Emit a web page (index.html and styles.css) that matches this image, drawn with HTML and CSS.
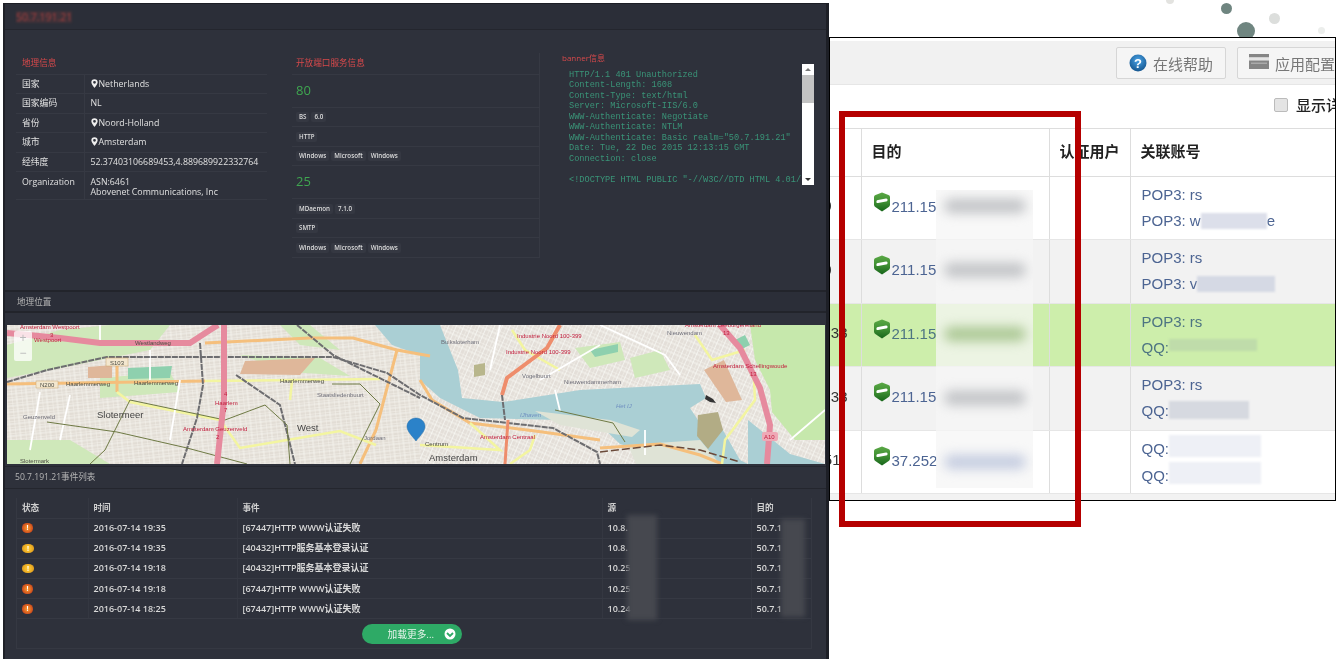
FILE: index.html
```html
<!DOCTYPE html>
<html lang="zh-CN">
<head>
  <meta charset="UTF-8">
  <title>50.7.191.21</title>
  <link rel="stylesheet" href="styles.css">
</head>
<body>

<div class="collage">

  <!-- decorative dots behind the right screenshot -->
  <span class="dot dot-a"></span>
  <span class="dot dot-b"></span>
  <span class="dot dot-c"></span>
  <span class="dot dot-d"></span>
  <span class="dot dot-e"></span>

  <!-- right screenshot -->
  <div class="shot">
    <div class="toolbar">
      <div class="tool-btn tool-help">
        <svg class="tool-icon" viewBox="0 0 18 18" width="18" height="18">
          <defs><radialGradient id="helpfill" cx="50%" cy="35%" r="65%"><stop offset="0" stop-color="#4aa3e6"/><stop offset="1" stop-color="#15568f"/></radialGradient></defs>
          <circle cx="9" cy="9" r="8.500" fill="url(#helpfill)"/><text x="9" y="13.500" class="help-mark">?</text>
        </svg>
        <span>在线帮助</span>
      </div>
      <div class="tool-btn tool-conf">
        <svg class="tool-icon conf-icon" viewBox="0 0 20 15" width="20" height="15"><rect width="20" height="3.500" fill="#858585"/><rect y="3.500" width="20" height="3" fill="#e4e4e4"/><rect y="6.500" width="20" height="8.500" fill="#858585"/><rect x="2" y="8.500" width="16" height="1.500" fill="#aaa"/></svg>
        <span>应用配置</span>
      </div>
    </div>
    <div class="detail-row">
      <span class="checkbox"></span>
      <span class="detail-label">显示详</span>
    </div>
    <table class="grid">
      <colgroup><col class="c-src"><col class="c-dst"><col class="c-user"><col></colgroup>
      <thead>
        <tr><th></th><th>目的</th><th>认证用户</th><th>关联账号</th></tr>
      </thead>
      <tbody>
        <tr>
          <td class="cut cut-far"><span>0</span></td>
          <td class="dst"><svg class="shield" viewBox="0 0 16 20" width="16" height="20"><use href="#shield-icon"/></svg>211.15</td>
          <td></td>
          <td class="acct"><div>POP3: rs</div><div>POP3: w<span class="mask mask-a"></span>e</div></td>
        </tr>
        <tr class="alt">
          <td class="cut cut-far"><span>0</span></td>
          <td class="dst"><svg class="shield" viewBox="0 0 16 20" width="16" height="20"><use href="#shield-icon"/></svg>211.15</td>
          <td></td>
          <td class="acct"><div>POP3: rs</div><div>POP3: v<span class="mask mask-b"></span></div></td>
        </tr>
        <tr class="hit">
          <td class="cut"><span>33</span></td>
          <td class="dst"><svg class="shield" viewBox="0 0 16 20" width="16" height="20"><use href="#shield-icon"/></svg>211.15</td>
          <td></td>
          <td class="acct"><div>POP3: rs</div><div>QQ:<span class="mask mask-c"></span></div></td>
        </tr>
        <tr class="alt">
          <td class="cut"><span>33</span></td>
          <td class="dst"><svg class="shield" viewBox="0 0 16 20" width="16" height="20"><use href="#shield-icon"/></svg>211.15</td>
          <td></td>
          <td class="acct"><div>POP3: rs</div><div>QQ:<span class="mask mask-d"></span></div></td>
        </tr>
        <tr>
          <td class="cut cut-mid"><span>51</span></td>
          <td class="dst"><svg class="shield" viewBox="0 0 16 20" width="16" height="20"><use href="#shield-icon"/></svg>37.252</td>
          <td></td>
          <td class="acct"><div>QQ:<span class="mask mask-e"></span></div><div>QQ:<span class="mask mask-e"></span></div></td>
        </tr>
      </tbody>
    </table>
    <div class="grid-foot"></div>
  </div>

  <!-- blur patch over the destination column -->
  <div class="blur-patch">
    <span class="smear smear-1"></span>
    <span class="smear smear-2"></span>
    <span class="smear smear-3"></span>
    <span class="smear smear-4"></span>
    <span class="smear smear-5"></span>
  </div>

  <div class="red-box"></div>

  <!-- left dark screenshot -->
  <div class="panel">
    <div class="panel-head"><span class="ip-title">50.7.191.21</span></div>

    <div class="info">
      <table class="tbl geo">
        <colgroup><col class="geo-key"><col></colgroup>
        <tr class="tbl-title"><td colspan="2">地理信息</td></tr>
        <tr><td class="k">国家</td><td><svg class="pin-mini" viewBox="0 0 8 10" width="7" height="9"><path d="M4 0a3.600 3.600 0 0 0-3.600 3.600C.4 6 4 10 4 10s3.600-4 3.600-6.400A3.600 3.600 0 0 0 4 0zm0 5.200a1.600 1.600 0 1 1 0-3.200 1.600 1.600 0 0 1 0 3.200z"/></svg>Netherlands</td></tr>
        <tr><td class="k">国家编码</td><td>NL</td></tr>
        <tr><td class="k">省份</td><td><svg class="pin-mini" viewBox="0 0 8 10" width="7" height="9"><path d="M4 0a3.600 3.600 0 0 0-3.600 3.600C.4 6 4 10 4 10s3.600-4 3.600-6.400A3.600 3.600 0 0 0 4 0zm0 5.200a1.600 1.600 0 1 1 0-3.200 1.600 1.600 0 0 1 0 3.200z"/></svg>Noord-Holland</td></tr>
        <tr><td class="k">城市</td><td><svg class="pin-mini" viewBox="0 0 8 10" width="7" height="9"><path d="M4 0a3.600 3.600 0 0 0-3.600 3.600C.4 6 4 10 4 10s3.600-4 3.600-6.400A3.600 3.600 0 0 0 4 0zm0 5.200a1.600 1.600 0 1 1 0-3.200 1.600 1.600 0 0 1 0 3.200z"/></svg>Amsterdam</td></tr>
        <tr><td class="k">经纬度</td><td>52.37403106689453,4.889689922332764</td></tr>
        <tr class="org"><td class="k">Organization</td><td>ASN:6461<br>Abovenet Communications, Inc</td></tr>
      </table>

      <table class="tbl ports">
        <tr class="tbl-title"><td>开放端口服务信息</td></tr>
        <tr class="port"><td>80</td></tr>
        <tr><td><span class="tag">BS</span><span class="tag">6.0</span></td></tr>
        <tr><td><span class="tag">HTTP</span></td></tr>
        <tr><td><span class="tag">Windows</span><span class="tag">Microsoft</span><span class="tag">Windows</span></td></tr>
        <tr class="port"><td>25</td></tr>
        <tr><td><span class="tag">MDaemon</span><span class="tag">7.1.0</span></td></tr>
        <tr><td><span class="tag">SMTP</span></td></tr>
        <tr><td><span class="tag">Windows</span><span class="tag">Microsoft</span><span class="tag">Windows</span></td></tr>
      </table>

      <div class="banner">
        <div class="banner-title">banner信息</div>
        <div class="banner-box">
          <pre class="banner-text">HTTP/1.1 401 Unauthorized
Content-Length: 1608
Content-Type: text/html
Server: Microsoft-IIS/6.0
WWW-Authenticate: Negotiate
WWW-Authenticate: NTLM
WWW-Authenticate: Basic realm="50.7.191.21"
Date: Tue, 22 Dec 2015 12:13:15 GMT
Connection: close

&lt;!DOCTYPE HTML PUBLIC "-//W3C//DTD HTML 4.01/</pre>
          <div class="scrollbar">
            <span class="arrow arrow-up"></span>
            <span class="thumb"></span>
            <span class="track"></span>
            <span class="arrow arrow-down"></span>
          </div>
        </div>
      </div>
    </div>

    <div class="section-head">地理位置</div>

    <div class="map">
      <svg class="map-svg" viewBox="7 325 818 139" width="818" height="139">
        <defs>
          <pattern id="blocks" width="10" height="6" patternUnits="userSpaceOnUse" patternTransform="rotate(-6)">
            <rect width="10" height="6" fill="#e2ddd5"/>
            <path d="M0 0H10M0 3H10M0 0V6M5 0V6" stroke="#f7f6f1" stroke-width=".8"/>
          </pattern>
          <pattern id="blocks2" width="7" height="9" patternUnits="userSpaceOnUse" patternTransform="rotate(24)">
            <rect width="7" height="9" fill="#e4dfd9"/>
            <path d="M0 0H7M0 4H7M0 0V9M3.500 0V9" stroke="#f8f8f4" stroke-width=".8"/>
          </pattern>
          <linearGradient id="shieldfill" x1="0" y1="0" x2="0" y2="1">
            <stop offset="0" stop-color="#5aa845"/>
            <stop offset=".5" stop-color="#3f8f33"/>
            <stop offset="1" stop-color="#17651a"/>
          </linearGradient>
          <symbol id="shield-icon" viewBox="0 0 16 20">
            <path d="M8 .5 14.500 3Q16 3.600 16 5V12.500Q16 14 14.700 15L8 19.500 1.300 15Q0 14 0 12.500V5Q0 3.600 1.500 3z" fill="url(#shieldfill)"/>
            <path d="M2.500 10.500Q2 8 4 8L12 6.500Q14 6.300 13.500 8.500Q13.300 9.500 12 9.600L4 11Q2.800 11.200 2.500 10.500z" fill="#fff"/>
          </symbol>
        </defs>

        <rect x="7" y="325" width="818" height="139" fill="url(#blocks)"/>
        <rect x="420" y="325" width="405" height="139" fill="url(#blocks2)"/>

        <!-- parks and industrial patches -->
        <path class="park" d="M7 345 60 330 110 325 170 325 150 350 60 368 7 378z"/>
        <path class="park" d="M100 378 170 372 180 392 100 398z"/>
        <path class="park" d="M7 440 70 440 110 464H7z"/>
        <path class="park" d="M240 355 320 358 350 376 290 372z"/>
        <path class="sand" d="M245 361 315 358 300 375 240 374z"/>
        <path class="sand" d="M88 367 112 365 112 378 88 378z"/>
        <path class="park2" d="M128 368 172 366 170 378 128 379z"/>
        <path class="park" d="M280 325H310L340 350 300 345z"/>
        <path class="park" d="M575 348 620 342 625 360 590 368z"/>
        <path class="park" d="M630 358 660 350 670 370 635 378z"/>
        <path class="park2" d="M590 350 618 344 618 352 595 357z"/>

        <!-- water -->
        <path class="water" d="M420 325H440L458 370 462 398 503 402 580 390 700 384 706 398 690 408 698 420 720 425 740 460 748 464H660L640 450 620 444 600 425 560 420 480 418 440 398 420 380z"/>
        <path class="water" d="M375 325H420V355L392 345z"/>
        <path class="water" d="M748 420 790 454 825 464H748z"/>

        <!-- east side green and islands -->
        <path class="green" d="M750 325H825V440L795 440 772 412 770 390 755 360z"/>
        <path class="sand2" d="M698 415 718 412 723 430 708 449 697 436z"/>
        <path class="land" d="M535 411 610 420 640 430 632 437 560 425z"/>
        <path class="land" d="M628 445 700 440 720 464H636z"/>
        <path class="olive" d="M474 365 485 363 485 375 474 377z"/>
        <path class="sand" d="M704 370 724 360 742 400 726 402z"/>
        <path class="park2" d="M745 335 735 340 740 350 750 345z"/>

        <!-- primary roads -->
        <g class="road-o">
          <path d="M7 384 205 381"/>
          <path d="M205 343 310 338 353 338 397 350 430 356"/>
          <path d="M117 362V392"/>
          <path d="M397 350 376 430 360 464"/>
          <path d="M420 380 432 400 470 423 535 431 600 440"/>
          <path d="M600 448 660 444 700 455 722 464"/>
        </g>
        <g class="road-y">
          <path d="M205 381 380 379"/>
          <path d="M117 392 130 402 220 420 240 448 340 431 376 445"/>
          <path d="M512 330 525 350 560 370"/>
          <path d="M695 335 712 360 745 350"/>
          <path d="M722 464 725 440 755 400 754 380 745 360"/>
          <path d="M470 423 500 450 420 445"/>
          <path d="M535 435 530 450 510 464"/>
          <path d="M292 381 290 400"/>
        </g>
        <g class="road-w">
          <path d="M100 325V345M150 350V380M180 380 170 440M40 392 30 450M70 395 60 440"/>
          <path d="M500 325 490 370M600 325 665 355 680 375M540 380 600 345"/>
          <path d="M560 411 555 390M645 455V430M790 440 825 410"/>
        </g>

        <!-- rail lines -->
        <g class="rail">
          <path d="M7 382 47 370 107 357 200 357 333 357 387 373 420 395 463 418 553 428 597 452 600 464"/>
          <path d="M200 343 203 385 197 418 182 464"/>
          <path d="M297 325 333 355 420 398"/>
          <path d="M236 375 280 405 295 464"/>
          <path d="M502 395 505 420"/>
        </g>

        <!-- metro and tram lines -->
        <g class="tram">
          <path d="M47 422 117 432 187 448 247 464"/>
          <path d="M130 400 225 420 265 405"/>
          <path d="M332 384 360 384 380 404 350 464"/>
          <path d="M265 405 287 425 290 464"/>
          <path d="M130 400 105 450 90 464"/>
          <path d="M555 410 613 423 625 442"/>
        </g>

        <!-- motorways -->
        <g class="motor">
          <path d="M7 333 60 338 100 343 190 343 210 330 218 325"/>
          <path d="M224 325V400L217 464"/>
          <path d="M720 325 740 348 760 388 770 425 767 464"/>
        </g>
        <path class="motor-o" d="M560 325 547 348 507 378 502 395"/>
        <path class="motor-o thin" d="M508 420 505 464"/>
        <path class="ferry" d="M600 452 660 445 700 450 740 462"/>

        <!-- map labels -->
        <text class="lb lb-red" x="20" y="329">Amsterdam Westpoort</text>
        <text class="lb lb-red" x="50" y="337">3</text>
        <text class="lb lb-red" x="34" y="342">Westpoort</text>
        <text class="lb lb-dk" x="135" y="345">Westlandweg</text>
        <rect class="shield-lb" x="106" y="358" width="22" height="8"/>
        <text class="lb lb-dk" x="110" y="364.500">S103</text>
        <rect class="shield-lb" x="36" y="381" width="22" height="7"/>
        <text class="lb lb-dk" x="40" y="387">N200</text>
        <text class="lb lb-dk" x="66" y="386">Haarlemmerweg</text>
        <text class="lb lb-dk" x="134" y="385">Haarlemmerweg</text>
        <text class="lb lb-dk" x="280" y="383">Haarlemmerweg</text>
        <text class="lb lb-gr" x="317" y="397">Staatsliedenbuurt</text>
        <text class="lb lb-red" x="215" y="405">Haarlem</text>
        <text class="lb lb-red" x="224" y="396">4</text>
        <text class="lb lb-red" x="224" y="412">7</text>
        <text class="lb lb-gr" x="23" y="419">Geuzenveld</text>
        <text class="lb-town" x="97" y="418">Slotermeer</text>
        <text class="lb lb-red" x="183" y="431">Amsterdam Geuzenveld</text>
        <text class="lb lb-red" x="216" y="439">2</text>
        <text class="lb-town" x="297" y="431">West</text>
        <text class="lb lb-gr" x="364" y="440">Jordaan</text>
        <text class="lb lb-dk" x="20" y="463">Slotermark</text>
        <text class="lb lb-gr" x="441" y="344">Buiksloterham</text>
        <text class="lb lb-red" x="517" y="338">Industrie Noord 100-399</text>
        <text class="lb lb-red" x="506" y="354">Industrie Noord 100-399</text>
        <text class="lb lb-gr" x="522" y="378">Vogelbuurt</text>
        <text class="lb lb-gr" x="564" y="384">Nieuwendammerham</text>
        <text class="lb lb-gr" x="667" y="335">Nieuwendam</text>
        <text class="lb lb-red" x="685" y="327">Amsterdam Zeeburgereiland</text>
        <text class="lb lb-red" x="723" y="335">13</text>
        <text class="lb lb-red" x="713" y="368">Amsterdam Schellingwoude</text>
        <text class="lb lb-red" x="750" y="376">13</text>
        <text class="lb lb-blue" x="616" y="408">Het IJ</text>
        <text class="lb lb-blue" x="520" y="417">IJhaven</text>
        <text class="lb lb-red" x="480" y="439">Amsterdam Centraal</text>
        <text class="lb lb-dk" x="425" y="446">Centrum</text>
        <text class="lb-town" x="429" y="461">Amsterdam</text>
        <rect class="shield-a10" x="762" y="432" width="16" height="9" rx="2"/>
        <text class="lb lb-red" x="764" y="439">A10</text>
        <path class="boat" d="M706 395l7 4 3 4-6-1-5-3z"/>

        <!-- marker -->
        <path class="marker" d="M416 418c-5 0-9 3.800-9 8.600 0 5 6 10.400 9 14.400 3-4 9-9.400 9-14.400 0-4.800-4-8.600-9-8.600z"/>
      </svg>
      <div class="zoom-ctl">
        <span class="zoom-btn">+</span>
        <span class="zoom-btn">−</span>
      </div>
    </div>

    <div class="events">
      <div class="events-head">50.7.191.21事件列表</div>
      <div class="events-wrap">
        <table class="ev-table">
          <colgroup><col class="e1"><col class="e2"><col class="e3"><col class="e4"><col></colgroup>
          <thead>
            <tr><th>状态</th><th>时间</th><th>事件</th><th>源</th><th>目的</th></tr>
          </thead>
          <tbody>
            <tr><td><span class="alert alert-red">!</span></td><td>2016-07-14 19:35</td><td>[67447]HTTP WWW认证失败</td><td>10.8.</td><td>50.7.1</td></tr>
            <tr><td><span class="alert alert-amber">!</span></td><td>2016-07-14 19:35</td><td>[40432]HTTP服务基本登录认证</td><td>10.8.</td><td>50.7.1</td></tr>
            <tr><td><span class="alert alert-amber">!</span></td><td>2016-07-14 19:18</td><td>[40432]HTTP服务基本登录认证</td><td>10.25</td><td>50.7.1</td></tr>
            <tr><td><span class="alert alert-red">!</span></td><td>2016-07-14 19:18</td><td>[67447]HTTP WWW认证失败</td><td>10.25</td><td>50.7.1</td></tr>
            <tr><td><span class="alert alert-red">!</span></td><td>2016-07-14 18:25</td><td>[67447]HTTP WWW认证失败</td><td>10.24</td><td>50.7.1</td></tr>
          </tbody>
        </table>
        <div class="more-row">
          <button class="more-btn">加载更多...
            <svg class="more-icon" viewBox="0 0 12 12" width="12" height="12"><circle cx="6" cy="6" r="5.500" fill="#fff"/><path d="M3 5l3 3 3-3" fill="none" stroke="#2eaa66" stroke-width="1.800"/></svg>
          </button>
        </div>
      </div>
      <span class="ev-blur ev-blur-src"></span>
      <span class="ev-blur ev-blur-dst"></span>
    </div>
  </div>

</div>

</body>
</html>
```

FILE: styles.css
```css
html, body {
  margin: 0;
  padding: 0;
  background: #fff;
  overflow: hidden;
}

.collage {
  position: relative;
  width: 1338px;
  height: 659px;
  overflow: hidden;
  font-family: "Open Sans", "Noto Sans CJK SC", sans-serif;
}

/* dots */
.dot {
  position: absolute;
  border-radius: 50%;
}
.dot-a { left: 1166px; top: -4px; width: 8px; height: 8px; background: #e3e3e0; }
.dot-b { left: 1221px; top: 3px; width: 11px; height: 11px; background: #6f8580; }
.dot-c { left: 1237px; top: 22px; width: 18px; height: 18px; background: #6f8580; }
.dot-d { left: 1269px; top: 13px; width: 11px; height: 11px; background: #dcdedc; }
.dot-e { left: 1318px; top: 27px; width: 7px; height: 7px; background: #eceeec; }

/* right screenshot */
.shot {
  position: absolute;
  left: 829px;
  top: 37px;
  width: 505px;
  height: 462px;
  border: 1px solid #000;
  background: #fff;
  overflow: hidden;
  filter: blur(0.3px);
}

.toolbar {
  display: flex;
  gap: 11px;
  height: 44px;
  margin-top: 3px;
  padding: 6px 0 0 286px;
  box-sizing: border-box;
  background: #f1f1f1;
  border-bottom: 1px solid #e6e6e6;
}

.tool-btn {
  display: flex;
  flex-shrink: 0;
  align-items: center;
  gap: 6px;
  height: 32px;
  box-sizing: border-box;
  border: 1px solid #d6d6d6;
  border-radius: 2px;
  background: #f5f5f5;
  color: #777;
  font-size: 15px;
  font-family: "Noto Sans CJK SC", sans-serif;
}
.tool-help { width: 110px; padding-left: 12px; }
.tool-conf { width: 110px; padding-left: 11px; }
.conf-icon { margin-bottom: 4px; }

.help-mark {
  font-family: "Liberation Sans", sans-serif;
  font-size: 13px;
  font-weight: bold;
  fill: #fff;
  text-anchor: middle;
}

.detail-row {
  display: flex;
  align-items: center;
  gap: 8px;
  height: 43px;
  padding: 0 0 4px 444px;
  box-sizing: border-box;
  white-space: nowrap;
}
.checkbox {
  flex-shrink: 0;
  width: 12px;
  height: 12px;
  border: 1px solid #bbb;
  border-radius: 2px;
  background: #e4e4e4;
}
.detail-label {
  font-family: "Noto Sans CJK SC", sans-serif;
  font-size: 15px;
  font-weight: 500;
  color: #222;
}

.grid {
  width: 505px;
  border-collapse: collapse;
  table-layout: fixed;
  font-family: "Liberation Sans", "Noto Sans CJK SC", sans-serif;
  font-size: 15px;
  color: #4c6492;
}
.c-src { width: 31px; }
.c-dst { width: 188px; }
.c-user { width: 81px; }

.grid th {
  height: 47.500px;
  padding: 0 0 3px 10px;
  box-sizing: border-box;
  border-top: 1px solid #ddd;
  border-bottom: 1px solid #ddd;
  border-left: 1px solid #ddd;
  text-align: left;
  color: #222;
  font-size: 15px;
  font-family: "Noto Sans CJK SC", sans-serif;
  white-space: nowrap;
}
.grid th:first-child { border-left: 0; }

.grid td {
  height: 63.500px;
  box-sizing: border-box;
  padding: 0 0 0 12px;
  border-left: 1px solid #ddd;
  border-bottom: 1px solid #e6e6e6;
  white-space: nowrap;
  overflow: hidden;
}
.grid td:first-child { border-left: 0; }
.grid .alt td { background: #f2f2f2; }
.grid .hit td { background: #cdeeab; color: #4d7482; }

/* the source column is cut off by the dark panel, only the tail shows */
.grid td.cut {
  padding: 0 13px 4px 0;
  color: #333;
}
.cut span {
  display: block;
  margin-left: -30px;
  text-align: right;
}
.grid td.cut-far { padding-right: 29px; }
.grid td.cut-mid { padding-right: 20px; }

.grid td.dst {
  padding-bottom: 7px;
  line-height: 20px;
}
.shield {
  margin-right: 2px;
  vertical-align: 0;
}

.grid td.acct { padding: 0 0 0 11px; line-height: 26px; }

.mask {
  display: inline-block;
  height: 16px;
  vertical-align: -3px;
  filter: blur(1px);
}
.mask-a { width: 66px; background: #dcdfea; }
.mask-b { width: 78px; background: #d5d9e4; }
.mask-c { width: 88px; height: 12px; vertical-align: 2px; background: #bfdcaa; }
.mask-d { width: 80px; height: 18px; background: #d6d9e0; }
.mask-e { width: 92px; height: 22px; background: #eef0f6; }

.grid-foot {
  height: 6px;
  background: #f2f2f2;
}

/* blur patch */
.blur-patch {
  position: absolute;
  left: 936px;
  top: 190px;
  width: 97px;
  height: 298px;
  background: rgba(246, 246, 246, 0.75);
  overflow: hidden;
}
.smear {
  position: absolute;
  left: 8px;
  width: 82px;
  height: 14px;
  border-radius: 7px;
  background: #c0c2c5;
  filter: blur(6px);
}
.smear-1 { top: 9px; }
.smear-2 { top: 73px; }
.smear-3 { top: 137px; background: #a9c691; }
.smear-4 { top: 201px; }
.smear-5 { top: 265px; background: #c3cbdf; }

/* red frame */
.red-box {
  position: absolute;
  left: 839px;
  top: 111px;
  width: 230px;
  height: 404px;
  border: 6px solid #b50000;
}

/* left dark screenshot */
.panel {
  position: absolute;
  left: 3px;
  top: 3px;
  width: 826px;
  height: 656px;
  box-sizing: border-box;
  background: #2e313b;
  border-top: 1px solid #1c1e25;
  border-left: 2px solid #1f2128;
  border-right: 3px solid #1d1f26;
  color: #e0e0e0;
  font-size: 8.800px;
  overflow: hidden;
  filter: blur(0.3px);
}

.panel-head {
  height: 26px;
  padding: 7px 0 0 11px;
  box-sizing: border-box;
  background: #2b2e38;
  border-bottom: 1px solid #24262e;
}
.ip-title {
  display: inline-block;
  color: #a8403f;
  background: rgba(120, 60, 60, 0.25);
  font-size: 10.500px;
  line-height: 12px;
  filter: blur(0.8px);
}

.info {
  display: grid;
  grid-template-columns: 251px 248px 252px;
  column-gap: 25px;
  height: 259px;
  padding: 23px 0 0 11px;
  box-sizing: border-box;
  align-items: start;
}

.tbl {
  width: 100%;
  border-collapse: collapse;
  table-layout: fixed;
  line-height: 10px;
}
.tbl td {
  height: 19.500px;
  padding: 0 6px;
  border-bottom: 1px solid #363943;
  box-sizing: border-box;
  white-space: nowrap;
}
.tbl .tbl-title td {
  height: 21px;
  color: #d8494b;
  font-size: 8.600px;
}
.geo-key { width: 68px; }
.geo .k { border-right: 1px solid #363943; }
.geo .org td { height: 28px; vertical-align: top; padding-top: 5px; }

.pin-mini {
  fill: #eee;
  vertical-align: -1px;
  margin-right: 1px;
}

.ports {
  border-right: 1px solid #363943;
}
.ports td { padding: 0 4px; }
.ports .port td {
  height: 33px;
  padding-bottom: 2px;
  color: #3fa650;
  font-size: 13px;
}

.tag {
  display: inline-block;
  padding: 0 3px;
  margin-right: 2px;
  height: 10px;
  line-height: 10px;
  background: #353842;
  border-radius: 2px;
  color: #dcdcdc;
  font-size: 6.200px;
  font-weight: 600;
}

.banner {
  margin-left: -3px;
}
.banner-title {
  height: 11px;
  color: #d8494b;
  font-size: 8px;
  line-height: 10px;
}
.banner-box {
  display: flex;
}
.banner-text {
  width: 240px;
  height: 121px;
  margin: 0;
  padding: 6px 0 0 7px;
  box-sizing: border-box;
  overflow: hidden;
  color: #3a9478;
  font-family: "Liberation Mono", monospace;
  font-size: 8.600px;
  line-height: 10.450px;
  white-space: pre;
}
.scrollbar {
  display: flex;
  flex-direction: column;
  flex-shrink: 0;
  width: 12px;
  height: 121px;
  background: #fff;
}
.arrow {
  align-self: center;
  width: 0;
  height: 0;
  margin: 4px 0;
  border-left: 3px solid transparent;
  border-right: 3px solid transparent;
}
.arrow-up { border-bottom: 3px solid #777; }
.arrow-down { border-top: 3px solid #333; }
.thumb { height: 28px; background: #c3c3c3; }
.track { flex: 1; }

.section-head {
  height: 23px;
  margin-top: 1px;
  padding-left: 12px;
  box-sizing: border-box;
  background: #2b2e38;
  border-top: 2px solid #22242b;
  border-bottom: 2px solid #22242b;
  line-height: 21px;
  color: #b5b5b5;
  font-size: 8.600px;
}

.map {
  position: relative;
  height: 139px;
  margin-top: 12px;
  padding-left: 2px;
}
.map-svg { display: block; }

.park { fill: #cfe8ba; }
.park2 { fill: #8ed0ae; }
.sand { fill: #dfb79a; }
.sand2 { fill: #b2ac85; }
.olive { fill: #b8b68c; }
.water { fill: #aacfd4; }
.green { fill: #c6e8ac; }
.land { fill: #dfe3d6; }

.road-o path, .road-y path, .road-w path, .rail path, .tram path, .motor path, .motor-o, .ferry {
  fill: none;
}
.road-o path { stroke: #f5bf7c; stroke-width: 3; }
.road-y path { stroke: #f3f5a0; stroke-width: 2.500; }
.road-w path { stroke: #fff; stroke-width: 1.800; }
.rail path { stroke: #6d6d70; stroke-width: 2; stroke-dasharray: 6 1; }
.tram path { stroke: #6f7a45; stroke-width: 1; }
.motor path { stroke: #e68a9e; stroke-width: 6; }
.motor-o { stroke: #ee8d6c; stroke-width: 4; }
.motor-o.thin { stroke-width: 3; }
.ferry { stroke: #6b4a3a; stroke-width: 1.500; stroke-dasharray: 8 3; }

.lb {
  font-family: "Liberation Sans", sans-serif;
  font-size: 6px;
}
.lb-red { fill: #c2203f; }
.lb-dk { fill: #4a4a40; }
.lb-gr { fill: #6f6f7a; }
.lb-blue { fill: #6e8fc0; font-style: italic; }
.lb-town {
  font-family: "Liberation Sans", sans-serif;
  font-size: 9.500px;
  fill: #444;
}
.shield-lb { fill: #f3e7cf; stroke: #c9a56d; stroke-width: 0.500; }
.shield-a10 { fill: #efa9b6; }
.boat { fill: #333; }
.marker { fill: #2b82c9; stroke: #1f6aa6; stroke-width: 0.500; }

.zoom-ctl {
  position: absolute;
  left: 9px;
  top: 6px;
  display: flex;
  flex-direction: column;
  width: 18px;
  border-radius: 2px;
  background: rgba(255, 255, 255, 0.75);
}
.zoom-btn {
  height: 15px;
  line-height: 15px;
  text-align: center;
  color: #bbb;
  font-family: "Liberation Sans", sans-serif;
  font-size: 12px;
}

.events {
  position: relative;
  margin-top: 2px;
  height: 190px;
  border-top: 1px solid #25272f;
}
.events-head {
  height: 22px;
  padding: 5px 0 0 10px;
  box-sizing: border-box;
  border-bottom: 1px solid #24262e;
  color: #b5b5b5;
  font-size: 8.600px;
  line-height: 10px;
}
.events-wrap {
  width: 794px;
  height: 150px;
  margin: 9px 0 0 11px;
  border-bottom: 1px solid #353842;
  border-right: 1px solid #353842;
  border-left: 1px solid #353842;
}
.ev-table {
  width: 100%;
  border-collapse: collapse;
  table-layout: fixed;
  color: #d8d8d8;
  font-weight: 600;
}
.e1 { width: 71px; }
.e2 { width: 149px; }
.e3 { width: 365px; }
.e4 { width: 149px; }

.ev-table th, .ev-table td {
  height: 20.200px;
  box-sizing: border-box;
  padding: 0 5px;
  border-bottom: 1px solid #363943;
  border-left: 1px solid #343741;
  text-align: left;
  white-space: nowrap;
  font-size: 9px;
  line-height: 12px;
}
.ev-table th { height: 20px; font-weight: 600; color: #cfcfcf; font-size: 8.600px; }
.ev-table th:first-child, .ev-table td:first-child { border-left: 0; }

.alert {
  display: block;
  width: 11px;
  height: 10px;
  border-radius: 45%;
  color: #fff;
  font-size: 7px;
  line-height: 10px;
  text-align: center;
  font-weight: 700;
}
.alert-red { background: radial-gradient(circle, #f08a2a 20%, #c9471c 75%); }
.alert-amber { width: 12px; height: 9px; line-height: 9px; background: radial-gradient(circle, #f9c02c 30%, #dd9a1e 80%); }

.more-row {
  display: flex;
  justify-content: center;
  padding: 5px 4px 0 0;
}
.more-btn {
  display: flex;
  align-items: center;
  justify-content: flex-end;
  gap: 10px;
  width: 100px;
  height: 20px;
  padding: 0 6px 0 0;
  border: 0;
  border-radius: 10px;
  background: #2eaa66;
  color: #e8f5ec;
  font-family: "Open Sans", "Noto Sans CJK SC", sans-serif;
  font-size: 9.700px;
  white-space: nowrap;
}
.more-icon { flex-shrink: 0; }

.ev-blur {
  position: absolute;
  background: #46484f;
  filter: blur(2.500px);
}
.ev-blur-src { left: 622px; top: 48px; width: 30px; height: 105px; }
.ev-blur-dst { left: 776px; top: 52px; width: 24px; height: 98px; }
```
